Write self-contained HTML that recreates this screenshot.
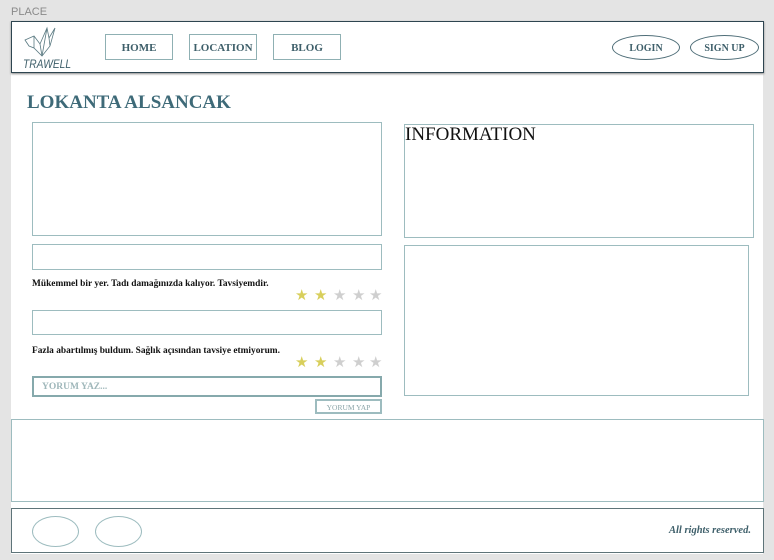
<!DOCTYPE html>
<html><head><meta charset="utf-8"><style>
*{margin:0;padding:0;box-sizing:border-box}
body{width:774px;height:560px;background:#e4e4e4;position:relative;overflow:hidden;font-family:"Liberation Serif",serif}
.a{position:absolute}
.b{position:absolute;border:1px solid #9dbcbf;background:#fff}
.nav{position:absolute;border:1px solid #8fb0b3;background:#fff;font-weight:bold;font-size:11px;color:#3e5f6a;display:flex;align-items:center;justify-content:center;padding-top:1px}
.ov{position:absolute;border:1px solid #4f6e78;border-radius:50%;font-weight:bold;font-size:10px;color:#3e5f6a;display:flex;align-items:center;justify-content:center;padding-top:1px}
.rev{position:absolute;font-size:9.4px;font-weight:bold;color:#111}
.st{position:absolute;font-size:15px;font-family:"DejaVu Sans",sans-serif;line-height:15px}
.y{color:#d8cf5c}.g{color:#cfcfcf}
</style></head><body>
<div class="a" style="left:11px;top:6px;font-family:'Liberation Sans',sans-serif;font-size:11px;color:#8a8a8a">PLACE</div>
<div class="a" style="left:11px;top:22px;width:752px;height:532px;background:#fff"></div>
<div class="a" style="left:11px;top:21px;width:753px;height:52px;border:1px solid #2e4550;background:#fff;box-shadow:0 1px 2px #888"></div>
<svg class="a" style="left:22px;top:24px" width="52" height="48" viewBox="0 0 52 48" fill="none" stroke="#5a7a82" stroke-width="0.8">
<path d="M3 16 L12 12 L18 20 L25 4 L27 14 L33 4 L28 22 L20 32 L12 24 L7 22 L3 16 Z M12 12 L12 24 M18 20 L20 32 M25 4 L20 32 M27 14 L28 22"/>
<text x="1" y="44" font-family="Liberation Sans Narrow, Liberation Sans" font-style="italic" font-size="12" textLength="48" lengthAdjust="spacingAndGlyphs" fill="#3e5f6a" stroke="none">TRAWELL</text>
</svg>
<div class="nav" style="left:105px;top:34px;width:68px;height:26px">HOME</div>
<div class="nav" style="left:189px;top:34px;width:68px;height:26px">LOCATION</div>
<div class="nav" style="left:273px;top:34px;width:68px;height:26px">BLOG</div>
<div class="ov" style="left:612px;top:35px;width:68px;height:25px">LOGIN</div>
<div class="ov" style="left:690px;top:35px;width:69px;height:25px">SIGN UP</div>
<div class="a" style="left:27px;top:92px;font-size:19px;font-weight:bold;color:#3e6a78">LOKANTA ALSANCAK</div>
<div class="b" style="left:32px;top:122px;width:350px;height:114px"></div>
<div class="b" style="left:404px;top:124px;width:350px;height:114px"><div style="font-size:19px;color:#111;line-height:20px;margin-top:0px">INFORMATION</div></div>
<div class="b" style="left:404px;top:245px;width:345px;height:151px"></div>
<div class="b" style="left:32px;top:244px;width:350px;height:26px"></div>
<div class="rev" style="left:32px;top:279px">Mükemmel bir yer. Tadı damağınızda kalıyor. Tavsiyemdir.</div>
<div class="st y" style="left:295px;top:288px">★</div><div class="st y" style="left:314px;top:288px">★</div><div class="st g" style="left:333px;top:288px">★</div><div class="st g" style="left:352px;top:288px">★</div><div class="st g" style="left:369px;top:288px">★</div>
<div class="b" style="left:32px;top:310px;width:350px;height:25px"></div>
<div class="rev" style="left:32px;top:346px">Fazla abartılmış buldum. Sağlık açısından tavsiye etmiyorum.</div>
<div class="st y" style="left:295px;top:355px">★</div><div class="st y" style="left:314px;top:355px">★</div><div class="st g" style="left:333px;top:355px">★</div><div class="st g" style="left:352px;top:355px">★</div><div class="st g" style="left:369px;top:355px">★</div>
<div class="b" style="left:32px;top:376px;width:350px;height:21px;border:2px solid #86a9ac;font-size:9.5px;color:#9fb7ba;font-weight:bold;padding-left:8px;line-height:19px">YORUM YAZ...</div>
<div class="b" style="left:315px;top:399px;width:67px;height:15px;border:2px solid #9dbcbf;font-size:7.5px;color:#8aa4a8;text-align:center;line-height:13px">YORUM YAP</div>
<div class="b" style="left:11px;top:419px;width:753px;height:83px"></div>
<div class="a" style="left:11px;top:508px;width:753px;height:45px;border:1px solid #5e7479;background:#fff"></div>
<div class="a" style="left:32px;top:516px;width:47px;height:31px;border:1px solid #9dbcbf;border-radius:50%"></div>
<div class="a" style="left:95px;top:516px;width:47px;height:31px;border:1px solid #9dbcbf;border-radius:50%"></div>
<div class="a" style="left:669px;top:525px;font-size:10.5px;font-style:italic;font-weight:bold;color:#3e5f6a">All rights reserved.</div>
</body></html>
